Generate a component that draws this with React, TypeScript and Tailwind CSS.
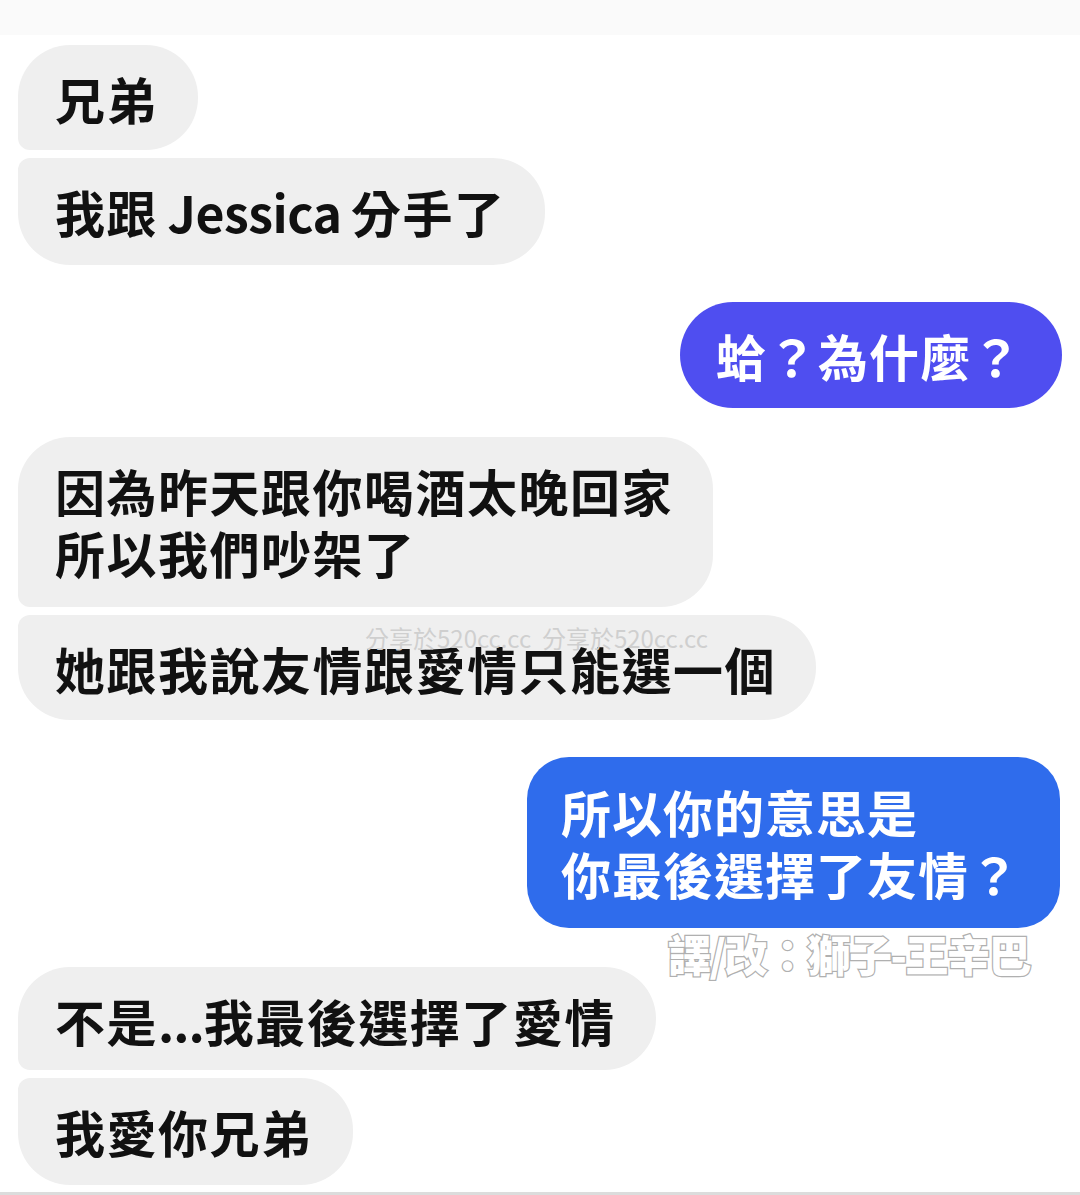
import React from "react";

const font = {
  fontFamily: '"Noto Sans CJK TC", "Noto Sans CJK SC", "Noto Sans", sans-serif',
};

function Gray({ children, pos, className = "" }: { children: React.ReactNode; pos: "first" | "last"; className?: string }) {
  const corner = pos === "first" ? "rounded-bl-[12px]" : "rounded-tl-[12px]";
  return (
    <div
      className={`self-start bg-[#efefef] text-[#111111] rounded-[52px] ${corner} pl-[37px] pr-[40px] py-[22px] text-[50px] leading-[62px] font-semibold tracking-[1.5px] ${className}`}
    >
      {children}
    </div>
  );
}

export default function App() {
  return (
    <div className="w-[1080px] h-[1195px] bg-white relative overflow-hidden" style={font}>
      <div className="h-[35px] bg-[#fafafa]" />
      <div className="flex flex-col px-[18px]">
        <Gray pos="first" className="mt-[10px] h-[105px] pr-[36px]">兄弟</Gray>
        <Gray pos="last" className="mt-[8px] h-[107px]">
          我跟<span className="tracking-[-0.5px]">{"\u2009"}Jessica{"\u2009"}</span>分手了
        </Gray>
        <div className="self-end mr-[0px] mt-[37px] h-[106px] bg-[#4f4ef0] text-white rounded-[53px] pl-[36px] pr-[40px] py-[22px] text-[50px] leading-[62px] font-semibold tracking-[1px]">
          蛤？為什麼？
        </div>
        <Gray pos="first" className="mt-[29px] h-[170px] pr-[36px]">
          因為昨天跟你喝酒太晚回家
          <br />
          所以我們吵架了
        </Gray>
        <Gray pos="last" className="mt-[8px] h-[105px]">她跟我說友情跟愛情只能選一個</Gray>
        <div className="self-end mr-[2px] mt-[37px] h-[171px] bg-[#2f6cec] text-white rounded-[42px] pl-[34px] pr-[40px] py-[23px] text-[50px] leading-[62px] font-semibold tracking-[1px]">
          所以你的意思是
          <br />
          你最後選擇了友情？
        </div>
        <Gray pos="first" className="mt-[39px] h-[103px]">
          不是<span className="tracking-[-1px]">...</span>我最後選擇了愛情
        </Gray>
        <Gray pos="last" className="mt-[8px] h-[107px]">我愛你兄弟</Gray>
      </div>

      <div className="absolute left-[668px] top-[928px] text-[43px] leading-[50px] font-black text-white tracking-[-1.5px] [-webkit-text-stroke:2.5px_#b0b0b0] [paint-order:stroke_fill]">
        譯/改：獅子-王辛巴
      </div>

      <div className="absolute left-[365px] top-[624px] text-[24px] leading-[28px] text-[#cfcfcf] tracking-[0px]">
        分享於520cc.cc&nbsp;&nbsp;分享於520cc.cc
      </div>

      <div className="absolute left-0 bottom-0 w-full h-[3px] bg-[#dcdcdc]" />
    </div>
  );
}
